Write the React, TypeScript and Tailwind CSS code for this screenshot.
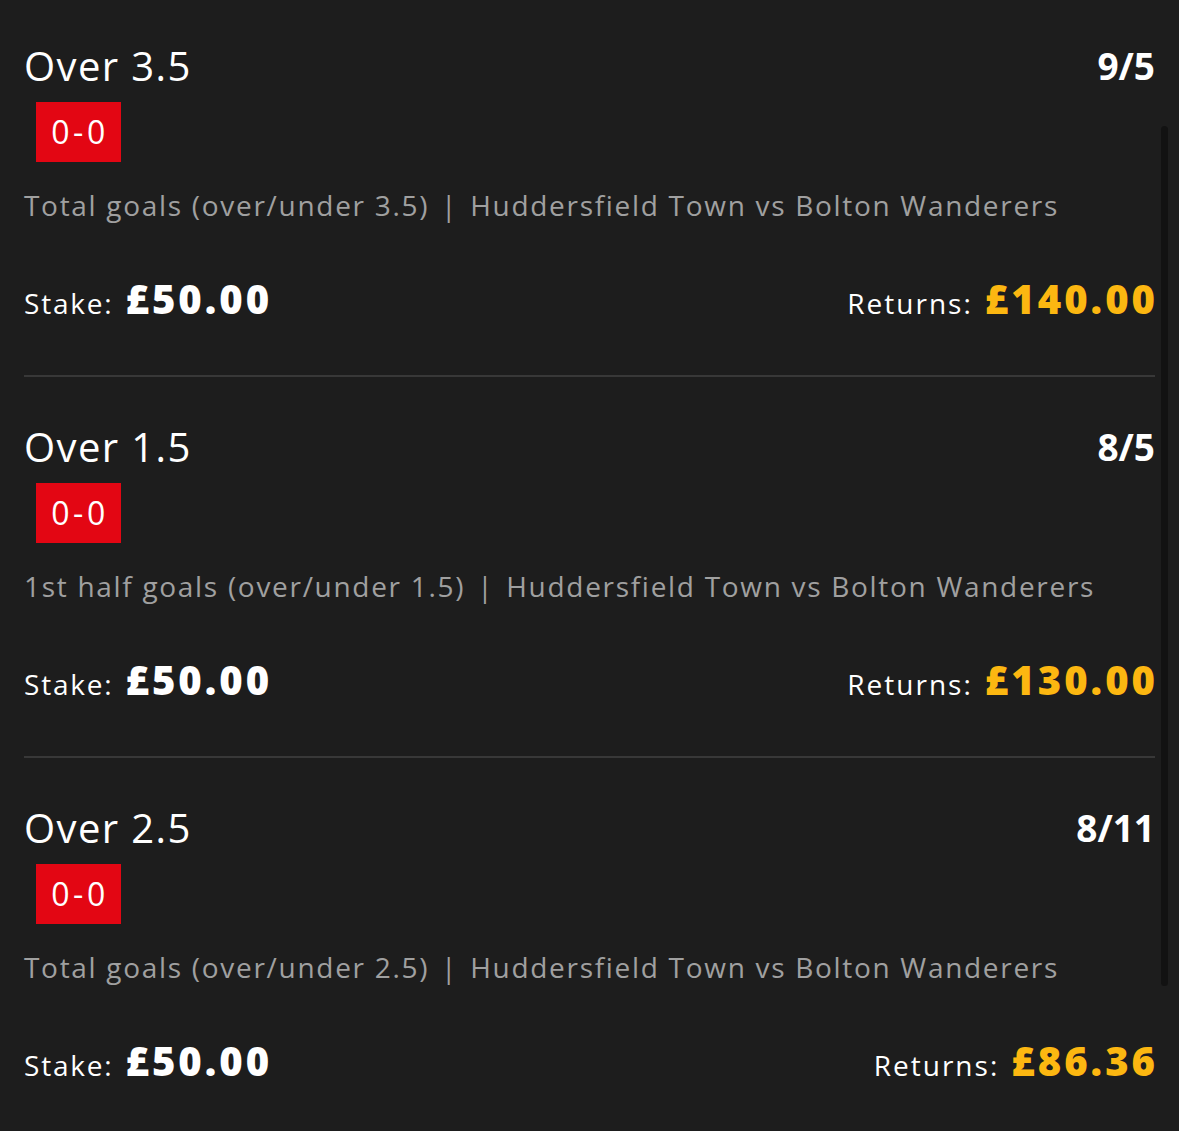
import React from "react"

type Bet = {
	selection: string
	odds: string
	score: string
	market: string
	event: string
	stake: string
	returns: string
}

const bets: Bet[] = [
	{
		selection: "Over 3.5",
		odds: "9/5",
		score: "0-0",
		market: "Total goals (over/under 3.5)",
		event: "Huddersfield Town vs Bolton Wanderers",
		stake: "£50.00",
		returns: "£140.00",
	},
	{
		selection: "Over 1.5",
		odds: "8/5",
		score: "0-0",
		market: "1st half goals (over/under 1.5)",
		event: "Huddersfield Town vs Bolton Wanderers",
		stake: "£50.00",
		returns: "£130.00",
	},
	{
		selection: "Over 2.5",
		odds: "8/11",
		score: "0-0",
		market: "Total goals (over/under 2.5)",
		event: "Huddersfield Town vs Bolton Wanderers",
		stake: "£50.00",
		returns: "£86.36",
	},
]

const BetRow = ({ bet, first, last }: { bet: Bet; first: boolean; last: boolean }) => (
	<div className={`flex flex-col ${first ? "pt-[42px]" : "pt-[46px]"} ${last ? "" : "border-b-2 border-[#383838]"} pb-[51px]`}>
		<div className="flex items-center justify-between">
			<p className="text-[40px] leading-[48px] tracking-[1.4px] text-white">{bet.selection}</p>
			<p className="text-[37px] leading-[48px] font-bold text-white">{bet.odds}</p>
		</div>
		<div className="mt-3 ml-3 flex h-[60px] w-[85px] items-center justify-center bg-[#e30613]">
			<span className="pl-[3px] text-[32px] tracking-[3.5px] text-white">{bet.score}</span>
		</div>
		<p className="mt-[26px] text-[28px] leading-[34px] tracking-[1.7px] text-[#a0a0a0]">
			{bet.market}
			<span className="mx-3">|</span>
			{bet.event}
		</p>
		<div className="mt-[53px] flex items-center justify-between">
			<p className="flex items-baseline gap-3 text-white">
				<span className="text-[28px] tracking-[1.8px]">Stake:</span>
				<span className="text-[40px] leading-[48px] font-extrabold tracking-[3px]">{bet.stake}</span>
			</p>
			<p className="flex items-baseline gap-3">
				<span className="text-[28px] tracking-[2px] text-white">Returns:</span>
				<span className="-mr-[3px] text-[40px] leading-[48px] font-extrabold tracking-[3px] text-[#fcb711]">{bet.returns}</span>
			</p>
		</div>
	</div>
)

export default function App() {
	return (
		<div className="relative h-[1131px] w-[1179px] overflow-hidden bg-[#1d1d1d] font-['Open_Sans',sans-serif]">
			<div className="flex flex-col pl-6 pr-6">
				{bets.map((bet, i) => (
					<BetRow key={i} bet={bet} first={i === 0} last={i === bets.length - 1} />
				))}
			</div>
			<div className="absolute top-[126px] left-[1161px] h-[860px] w-[7px] rounded-full bg-[#121212]" />
		</div>
	)
}
